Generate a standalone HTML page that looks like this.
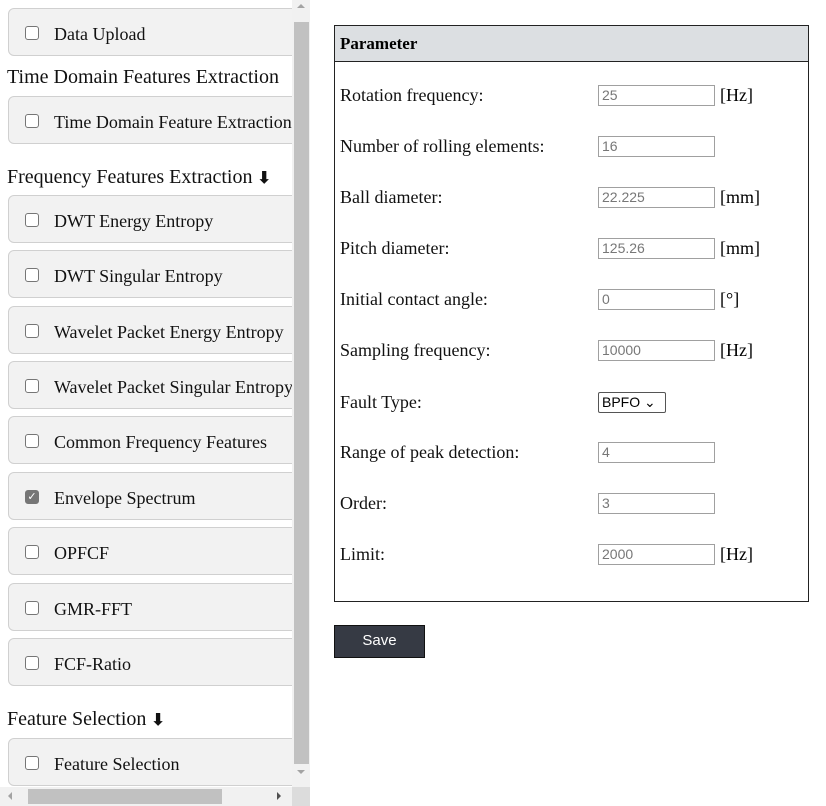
<!DOCTYPE html>
<html><head><style>
body{margin:0;width:826px;height:806px;background:#fff;font-family:"Liberation Serif",serif;position:relative;overflow:hidden}
.l{position:absolute;left:0;top:0;width:292px;height:787px;overflow:hidden}
.box{position:absolute;left:8px;width:300px;height:48px;background:#f2f2f2;border:1px solid #d0d0d0;border-radius:6px;box-sizing:border-box}
.box .cb{position:absolute;left:16px;top:17px;width:12px;height:12px;border:1px solid #767676;border-radius:3px;background:#fff}
.box span{position:absolute;left:45px;top:15px;font-size:18px;color:#111;white-space:nowrap}
.h{position:absolute;left:7px;font-size:20px;color:#111;white-space:nowrap}
.h b{font-size:16px}
.vs{position:absolute;left:292px;top:0;width:18px;height:787px;background:#f1f1f1}
.vs i{position:absolute;left:2px;top:22px;width:15px;height:742px;background:#c1c1c1}
.hs{position:absolute;left:0;top:787px;width:292px;height:19px;background:#f1f1f1}
.hs i{position:absolute;left:28px;top:2px;width:194px;height:15px;background:#c1c1c1}
.cr{position:absolute;left:292px;top:787px;width:18px;height:19px;background:#dcdcdc}
.tri{position:absolute;width:0;height:0;border:4px solid transparent}
.t{position:absolute;left:334px;top:25px;width:475px;height:577px;border:1px solid #222;box-sizing:border-box}
.th{height:35px;background:#dcdfe2;border-bottom:1px solid #222;font-weight:bold;font-size:17px;line-height:35px;padding-left:5px}
.r{position:absolute;left:5px;font-size:18px;color:#111}
.in{position:absolute;left:263px;width:117px;height:21px;border:1px solid #a0a0a0;box-sizing:border-box;font-family:"Liberation Sans",sans-serif;font-size:14px;color:#777;padding-left:3px;line-height:19px}
.u{position:absolute;left:385px;font-size:18px}
</style></head><body>
<div class="l">
<div class="box" style="top:8px"><div class="cb"></div><span>Data Upload</span></div>
<div class="h" style="top:66px">Time Domain Features Extraction</div>
<div class="box" style="top:96px"><div class="cb"></div><span>Time Domain Feature Extraction</span></div>
<div class="h" style="top:166px">Frequency Features Extraction <b>&#x2B07;</b></div>
<div class="box" style="top:195px"><div class="cb"></div><span>DWT Energy Entropy</span></div>
<div class="box" style="top:250px"><div class="cb"></div><span>DWT Singular Entropy</span></div>
<div class="box" style="top:306px"><div class="cb"></div><span>Wavelet Packet Energy Entropy</span></div>
<div class="box" style="top:361px"><div class="cb"></div><span>Wavelet Packet Singular Entropy</span></div>
<div class="box" style="top:416px"><div class="cb"></div><span>Common Frequency Features</span></div>
<div class="box" style="top:472px"><div class="cb" style="background:#767676;border-color:#767676;color:#fff;font-size:11px;line-height:12px;text-align:center;font-family:'DejaVu Sans'">✓</div><span>Envelope Spectrum</span></div>
<div class="box" style="top:527px"><div class="cb"></div><span>OPFCF</span></div>
<div class="box" style="top:583px"><div class="cb"></div><span>GMR-FFT</span></div>
<div class="box" style="top:638px"><div class="cb"></div><span>FCF-Ratio</span></div>
<div class="h" style="top:708px">Feature Selection <b>&#x2B07;</b></div>
<div class="box" style="top:738px"><div class="cb"></div><span>Feature Selection</span></div>
</div>
<div class="vs"><i></i><div class="tri" style="left:5px;top:4px;border-bottom-color:#a3a3a3;border-top-width:0"></div><div class="tri" style="left:5px;top:770px;border-top-color:#a3a3a3;border-bottom-width:0"></div></div>
<div class="hs"><i></i><div class="tri" style="left:8px;top:5px;border-right-color:#a3a3a3;border-left-width:0"></div><div class="tri" style="left:277px;top:5px;border-left-color:#505050;border-right-width:0"></div></div><div class="cr"></div>
<div class="t"><div class="th">Parameter</div>
<div class="r" style="top:59px">Rotation frequency:</div><div class="in" style="top:59px">25</div><div class="u" style="top:59px">[Hz]</div>
<div class="r" style="top:110px">Number of rolling elements:</div><div class="in" style="top:110px">16</div>
<div class="r" style="top:161px">Ball diameter:</div><div class="in" style="top:161px">22.225</div><div class="u" style="top:161px">[mm]</div>
<div class="r" style="top:212px">Pitch diameter:</div><div class="in" style="top:212px">125.26</div><div class="u" style="top:212px">[mm]</div>
<div class="r" style="top:263px">Initial contact angle:</div><div class="in" style="top:263px">0</div><div class="u" style="top:263px">[°]</div>
<div class="r" style="top:314px">Sampling frequency:</div><div class="in" style="top:314px">10000</div><div class="u" style="top:314px">[Hz]</div>
<div class="r" style="top:366px">Fault Type:</div><div class="in" style="top:366px;width:68px;color:#000;border-color:#555;border-radius:2px">BPFO ⌄</div>
<div class="r" style="top:416px">Range of peak detection:</div><div class="in" style="top:416px">4</div>
<div class="r" style="top:467px">Order:</div><div class="in" style="top:467px">3</div>
<div class="r" style="top:518px">Limit:</div><div class="in" style="top:518px">2000</div><div class="u" style="top:518px">[Hz]</div>
</div>
<div style="position:absolute;left:334px;top:625px;width:91px;height:33px;background:#363a44;border:1px solid #111;box-sizing:border-box;color:#fff;font-family:'Liberation Sans',sans-serif;font-size:15px;text-align:center;line-height:30px">Save</div>
</body></html>
